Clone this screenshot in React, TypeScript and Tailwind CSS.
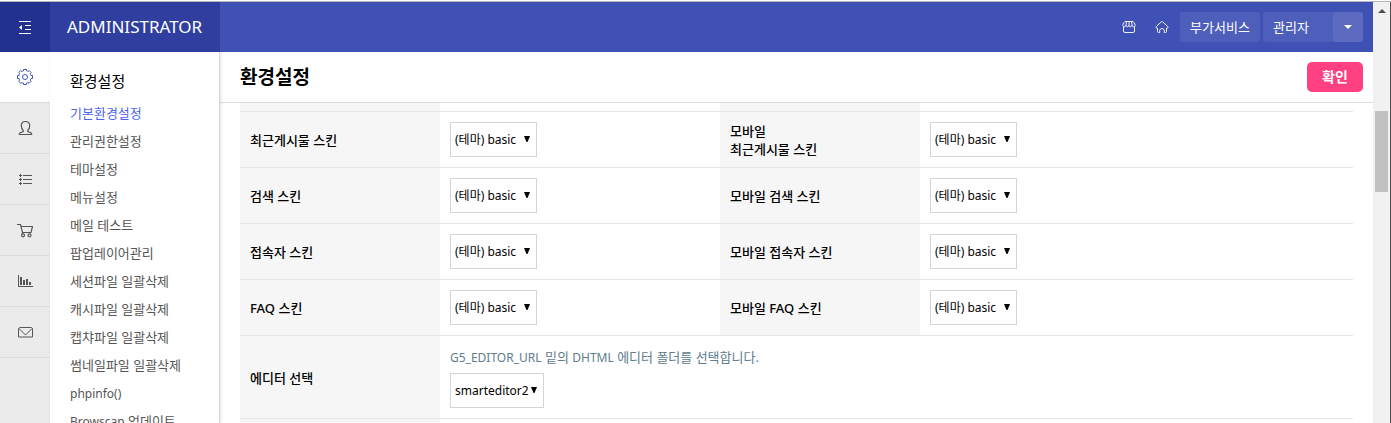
import React from "react";

const sideMenu = [
  "기본환경설정",
  "관리권한설정",
  "테마설정",
  "메뉴설정",
  "메일 테스트",
  "팝업레이어관리",
  "세션파일 일괄삭제",
  "캐시파일 일괄삭제",
  "캡챠파일 일괄삭제",
  "썸네일파일 일괄삭제",
  "phpinfo()",
  "Browscap 업데이트",
];

const skinRows = [
  { id: "recent", pc: "최근게시물 스킨", mobile: ["모바일", "최근게시물 스킨"] },
  { id: "search", pc: "검색 스킨", mobile: ["모바일 검색 스킨"] },
  { id: "visitor", pc: "접속자 스킨", mobile: ["모바일 접속자 스킨"] },
  { id: "faq", pc: "FAQ 스킨", mobile: ["모바일 FAQ 스킨"] },
];

function Icon({ children }: { children: React.ReactNode }) {
  return (
    <svg
      width="16"
      height="16"
      viewBox="0 0 16 16"
      fill="none"
      stroke="currentColor"
      strokeWidth="1"
      aria-hidden="true"
    >
      {children}
    </svg>
  );
}

const railItems = [
  {
    label: "환경설정",
    icon: (
      <Icon>
        <path d="M6.500.5h3v1.300q.9.200 1.500.7l1.100-1 2.100 2.100-1 1.200q.5.700.8 1.700h1.500v3h-1.500q-.3.900-.8 1.600l1 1.200-2.100 2.100-1.200-1q-.7.500-1.400.7v1.400h-3v-1.400q-.8-.2-1.500-.7l-1.200 1-2.100-2.100 1-1.200q-.5-.7-.7-1.600H.5v-3h1.500q.2-1 .7-1.700l-1-1.200 2.100-2.100 1.200 1q.7-.5 1.500-.7z" />
        <circle cx="8" cy="8" r="2.500" />
      </Icon>
    ),
  },
  {
    label: "회원관리",
    icon: (
      <Icon>
        <path
          d="M6.200 10.300C4.900 9.300 4.300 7.300 4.300 5.500c0-2.500 1.500-4 4.200-4s4.200 1.500 4.200 4c0 1.800-.6 3.800-1.900 4.800v1.200l3 1.200c.6.300.9.900.9 1.800H2.300c0-.9.300-1.500.9-1.800l3-1.200z"
          strokeWidth="1.200"
        />
      </Icon>
    ),
  },
  {
    label: "게시판관리",
    icon: (
      <Icon>
        <path d="M6 4.500h9M6 8.500h9M6 12.500h9M2 4.500h3M2 8.500h3M2 12.500h3M3.500 3v3M3.500 7v3M3.500 11v3" />
      </Icon>
    ),
  },
  {
    label: "쇼핑몰관리",
    icon: (
      <Icon>
        <path d="M0 2.500h3.500l2 8h8.500l1.500-6H4.200M5.500 10.500v1.500" strokeWidth="1.200" />
        <circle cx="6" cy="13.300" r="1.500" strokeWidth="1.200" />
        <circle cx="12.500" cy="13.300" r="1.500" strokeWidth="1.200" />
      </Icon>
    ),
  },
  {
    label: "쇼핑몰현황",
    icon: (
      <Icon>
        <path d="M1.500 2v11.500H16" />
        <path d="M4 12V4M7 12V7M10 12V6M13 12V9" strokeWidth="2" />
      </Icon>
    ),
  },
  {
    label: "SMS 관리",
    icon: (
      <Icon>
        <path d="M3 3.500h11.500l1 1v8.500h-14V4.500zM2 4.500l6.500 6.500 6.500-6.500" />
      </Icon>
    ),
  },
];

/* Latin words are set one step smaller so they sit evenly beside Hangul. */
function Mixed({ text }: { text: string }) {
  return (
    <>
      {text.split(/([A-Za-z][\w()]+)/).map((part, i) =>
        i % 2 === 1 ? (
          <span key={i} className="text-[12px]">
            {part}
          </span>
        ) : (
          part
        ),
      )}
    </>
  );
}

function SkinSelect({ id, value, className = "w-[87px]" }: { id: string; value: string; className?: string }) {
  return (
    <div className={`relative ${className}`}>
      <select
        id={id}
        className="block h-[35px] w-full appearance-none border border-[#d5d5d5] bg-white pl-1 pt-0.5 text-[12px] text-black"
      >
        <option>{value}</option>
      </select>
      <svg
        width="6"
        height="6"
        viewBox="0 0 6 6"
        aria-hidden="true"
        className="pointer-events-none absolute right-[7px] top-[14px]"
      >
        <path d="M0 0h6L3.500 6h-1z" fill="black" />
      </svg>
    </div>
  );
}

export default function App() {
  return (
    <div className="flex h-screen flex-col overflow-hidden border-t border-white bg-white font-['Noto_Sans','Noto_Sans_CJK_KR',sans-serif] text-[13px] leading-[18px] text-black">
      <div className="flex min-h-0 flex-1 border-t border-[#b5b5b5]">
        <div className="flex min-w-0 flex-1 flex-col">
          <header className="flex h-[50px] shrink-0 items-center bg-[#3f51b5] text-white">
            <button type="button" aria-label="메뉴 접기" className="flex h-full w-[50px] items-center justify-center bg-[#22318d]">
              <Icon>
                <path d="M2 2.500h12M8 6.500h6M8 10.500h6M2 14.500h12" />
                <path d="M5 6v5L2 8.500z" fill="currentColor" stroke="none" />
              </Icon>
            </button>
            <a href="#home" className="flex h-full w-[170px] items-center bg-[#303f9f] pl-[17px] text-[17px]">
              ADMINISTRATOR
            </a>
            <nav className="ml-auto flex items-center pr-[10px]">
              <a href="#shop" aria-label="쇼핑몰" className="flex w-[30px] justify-center">
                <Icon>
                  <path
                    d="M4 2.500h8q1.500 1 2.200 3.500c0 2.400-3 2.400-3.200 0 0 2.400-3 2.400-3 0 0 2.400-3 2.400-3 0-.2 2.400-3.200 2.400-3.200 0Q2.500 3.500 4 2.500zM5.500 2.500 5 6M8 2.500V6M10.500 2.500 11 6M2.500 7.500V12q0 1.500 1.500 1.500h8q1.500 0 1.500-1.500V7.500"
                    strokeOpacity=".9"
                  />
                </Icon>
              </a>
              <a href="#main" aria-label="메인" className="flex w-9 justify-center">
                <Icon>
                  <path
                    d="M2 8.800Q1.600 8 2.500 7.300L7.300 2.900q.7-.6 1.400 0l4.800 4.400q.9.700.5 1.500-.4.500-1.500.4v3.300q0 1-1 1h-1.200V11.500Q10 9.500 8 9.500t-2.300 2v2H4.500q-1 0-1-1V9.200Q2.400 9.300 2 8.800z"
                    strokeOpacity=".9"
                  />
                </Icon>
              </a>
              <a href="#service" className="flex h-[30px] w-20 items-center justify-center rounded-[3px] bg-[#4e5fbb]">
                부가서비스
              </a>
              <button type="button" className="ml-[3px] flex h-[30px] w-[100px] items-center rounded-[3px] bg-[#4e5fbb] pl-[10px]">
                관리자
                <span className="ml-auto flex h-full w-[30px] items-center justify-center rounded-[3px] bg-[#5c6bc0]">
                  <svg width="8" height="4" viewBox="0 0 8 4" aria-hidden="true">
                    <path d="M0 0h8L4 4z" fill="white" />
                  </svg>
                </span>
              </button>
            </nav>
          </header>

          <div className="flex min-h-0 flex-1">
            <nav aria-label="주 메뉴" className="w-[50px] shrink-0 bg-[#ebebeb] text-[#555]">
              {railItems.map((item, i) => (
                <button
                  key={item.label}
                  type="button"
                  aria-label={item.label}
                  className={`flex h-[51px] w-full items-center justify-center border-b border-[#dcdcdc] ${i === 0 ? "bg-white text-[#3f51b5]" : ""}`}
                >
                  {item.icon}
                </button>
              ))}
            </nav>
            <aside className="z-10 w-[170px] shrink-0 overflow-hidden border-r border-[#dadada] pl-5 pt-[19px] shadow-[1px_0_3px_rgba(0,0,0,0.12)]">
              <h2 className="text-[15px] leading-5 font-normal">환경설정</h2>
              <ul className="pt-2 text-[#555]">
                {sideMenu.map((item, i) => (
                  <li key={item} className="h-7">
                    <a href="#menu" className={`block leading-7 ${i === 0 ? "text-[#4d63f0]" : ""}`}>
                      <Mixed text={item} />
                    </a>
                  </li>
                ))}
              </ul>
            </aside>

            <main className="flex min-w-0 flex-1 flex-col">
              <div className="flex h-[51px] shrink-0 items-center justify-between border-b border-[#dcdcdc] pl-5 pr-[10px]">
                <h1 className="text-[19px] font-bold">환경설정</h1>
                <button type="button" className="h-[30px] w-14 rounded-[5px] bg-[#ff4081] text-[14px] font-bold text-white">
                  확인
                </button>
              </div>
              <div className="min-h-0 flex-1 overflow-hidden px-5">
                <table className="w-full table-fixed border-collapse text-left">
                  <colgroup>
                    <col className="w-[200px]" />
                    <col className="w-[280px]" />
                    <col className="w-[200px]" />
                    <col />
                  </colgroup>
                  <tbody>
                    <tr className="h-2 border-b border-[#e5e5e5]">
                      <td className="bg-[#f6f6f6] p-0" />
                      <td className="p-0" />
                      <td className="bg-[#f6f6f6] p-0" />
                      <td className="p-0" />
                    </tr>
                    {skinRows.map((row) => (
                      <tr key={row.id} className="h-14 border-b border-[#e5e5e5]">
                        <th scope="row" className="bg-[#f6f6f6] px-[10px] pt-0.5 font-medium">
                          <label htmlFor={row.id}>{row.pc}</label>
                        </th>
                        <td className="px-[10px]">
                          <SkinSelect id={row.id} value="(테마) basic" />
                        </td>
                        <th scope="row" className="bg-[#f6f6f6] px-[10px] pt-0.5 font-medium">
                          <label htmlFor={`${row.id}-mobile`}>
                            {row.mobile.map((line) => (
                              <span key={line} className="block">
                                {line}
                              </span>
                            ))}
                          </label>
                        </th>
                        <td className="px-[10px]">
                          <SkinSelect id={`${row.id}-mobile`} value="(테마) basic" />
                        </td>
                      </tr>
                    ))}
                    <tr className="border-b border-[#e5e5e5]">
                      <th scope="row" className="bg-[#f6f6f6] px-[10px] pt-0.5 font-medium">
                        <label htmlFor="editor">에디터 선택</label>
                      </th>
                      <td colSpan={3} className="px-[10px] pb-[10px] pt-3">
                        <p className="mb-[7px] h-[18px] text-[#607d8b]">
                          <Mixed text="G5_EDITOR_URL 밑의 DHTML 에디터 폴더를 선택합니다." />
                        </p>
                        <SkinSelect id="editor" value="smarteditor2" className="w-[94px]" />
                      </td>
                    </tr>
                    <tr className="h-14">
                      <td className="bg-[#f6f6f6]" />
                      <td colSpan={3} />
                    </tr>
                  </tbody>
                </table>
              </div>
            </main>
          </div>
        </div>
        <div aria-hidden="true" className="flex w-[18px] shrink-0 flex-col items-center border-r border-[#505050] bg-[#f1f1f1]">
          <svg width="8" height="4" viewBox="0 0 8 4" className="mt-[7px]">
            <path d="M0 4h8L4 0z" fill="#505050" />
          </svg>
          <div className="mt-[98px] h-[81px] w-[13px] bg-[#c1c1c1]" />
        </div>
      </div>
    </div>
  );
}
